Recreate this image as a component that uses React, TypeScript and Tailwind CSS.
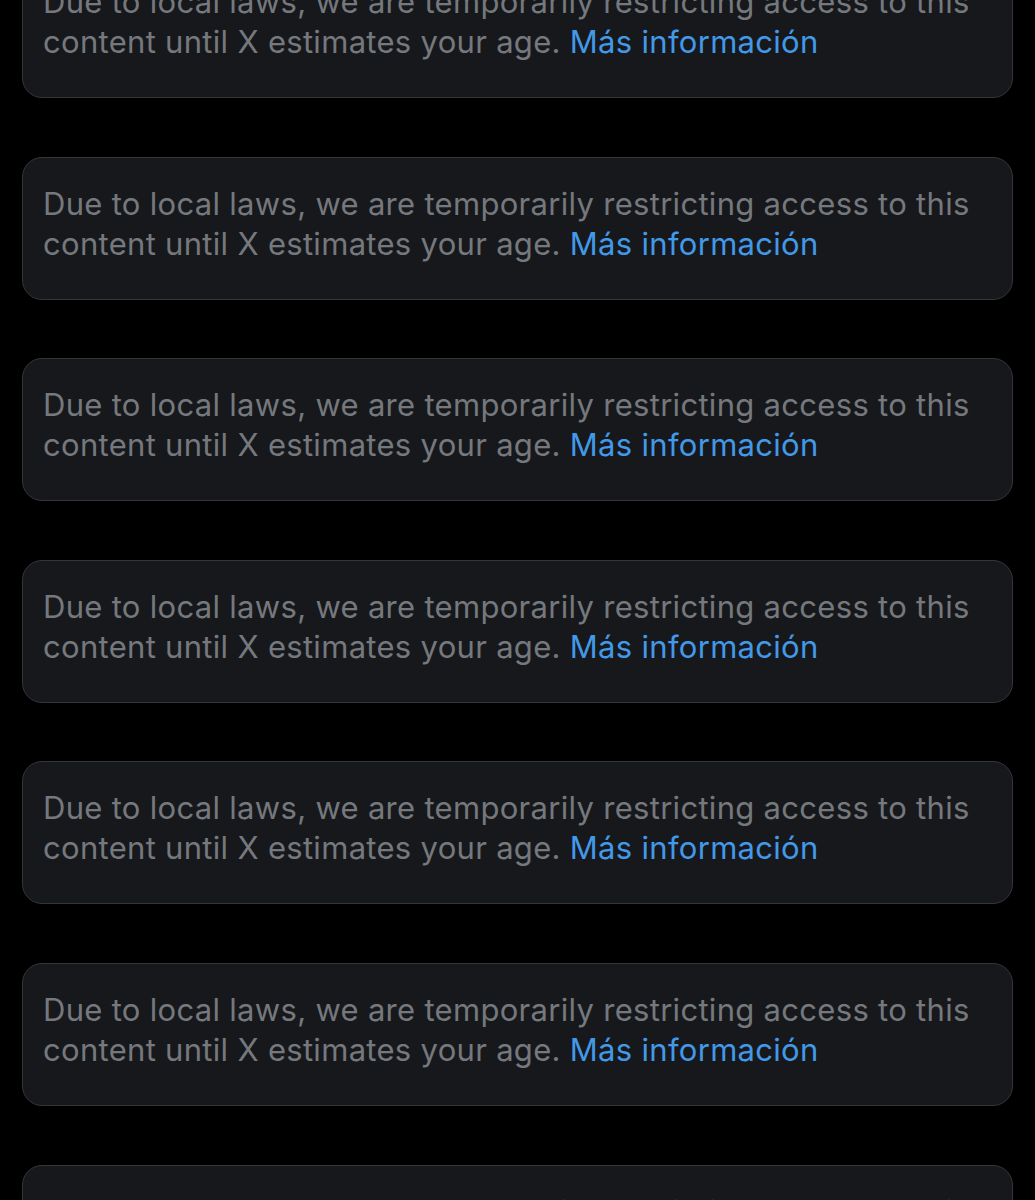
import React from "react";

const Card = () => (
  <div className="rounded-[20px] border border-[#34363a] bg-[#17181c] pl-[20px] pr-[20px] pt-[26px] pb-[35px]">
    <p
      className="text-[31px] leading-[40px] tracking-[0.3px] text-[#75787d]"
      style={{ fontFamily: "Inter, 'Noto Sans', sans-serif" }}
    >
      Due to local laws, we are temporarily restricting access to this content until X estimates your age.{" "}
      <span className="text-[#4299e8]">Más información</span>
    </p>
  </div>
);

export default function App() {
  return (
    <div className="min-h-screen w-full overflow-hidden bg-black">
      <div className="-mt-[45px] flex flex-col gap-[58.6px] px-[22px]">
        {Array.from({ length: 7 }).map((_, i) => (
          <Card key={i} />
        ))}
      </div>
    </div>
  );
}
